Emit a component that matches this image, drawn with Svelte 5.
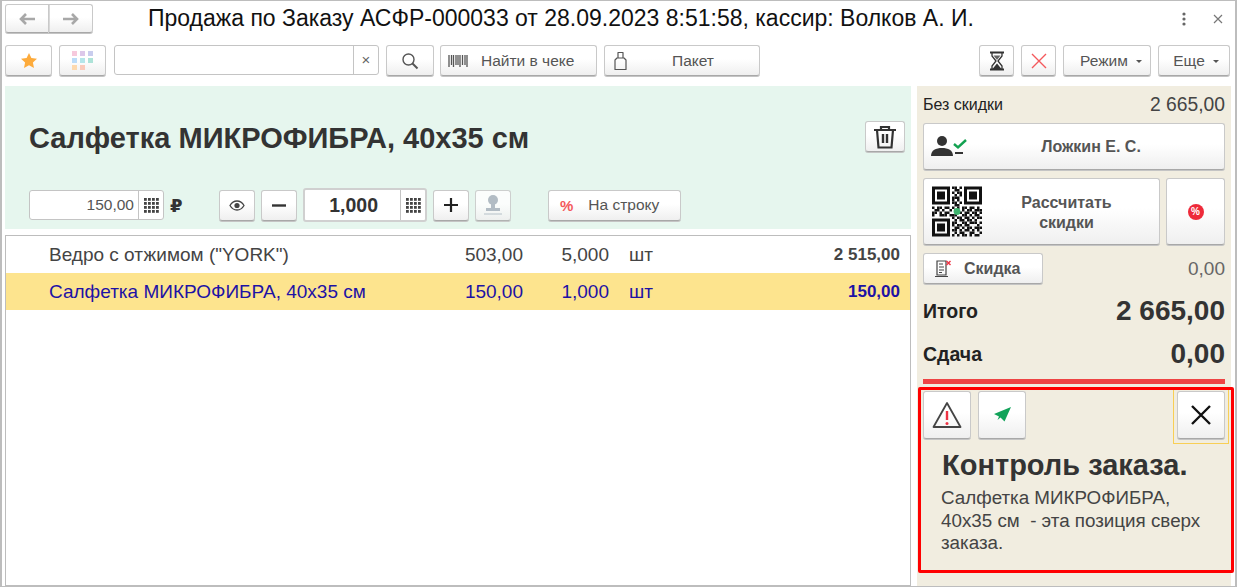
<script>
	const rows = [
		{ name: 'Ведро с отжимом ("YORK")', price: '503,00', qty: '5,000', unit: 'шт', sum: '2 515,00', selected: false },
		{ name: 'Салфетка МИКРОФИБРА, 40х35 см', price: '150,00', qty: '1,000', unit: 'шт', sum: '150,00', selected: true }
	];

	const appColors = ['#f6c9dc', '#dcc8ea', '#c9cdee', '#bcdcf8', '#b5e6ea', '#aee3d8', '#fdd9ae', '#fbcabb'];

	// QR modules without the three finder squares
	const qrBits = [
		'00000000110100000000',
		'00000000011000000000',
		'00000000101100000000',
		'00000000010100000000',
		'00000000111000000000',
		'00000000101000000000',
		'00000000110100000000',
		'00000000011000000000',
		'10110110101011011010',
		'01101001010010110111',
		'11010110001101101101',
		'10011101110011010110',
		'00000000101101101011',
		'00000000010110110100',
		'00000000110011011101',
		'00000000101101100010',
		'00000000011010110111',
		'00000000110101101010',
		'00000000010110011001',
		'00000000101011010110'
	];
	const qrCells = qrBits.flatMap((line, y) =>
		[...line].flatMap((bit, x) => (bit === '1' ? [{ x, y }] : []))
	);
	const keypadDots = [1, 5, 9, 13].flatMap((y) => [1, 5, 9, 13].map((x) => ({ x, y })));
</script>

{#snippet keypad()}
	<svg width="16" height="16" viewBox="0 0 16 16">
		{#each keypadDots as d}
			<rect x={d.x} y={d.y} width="2.8" height="2.8" fill="#444" />
		{/each}
	</svg>
{/snippet}

<div class="window">
	<header class="head">
		<div class="nav">
			<button class="btn nav-part" aria-label="Назад">
				<svg width="18" height="14" viewBox="0 0 18 14"><path d="M8 2 3 7l5 5M3 7h14" fill="none" stroke="#a8a8a8" stroke-width="2.6" /></svg>
			</button>
			<button class="btn nav-part" aria-label="Вперед">
				<svg width="18" height="14" viewBox="0 0 18 14"><path d="M10 2l5 5-5 5M15 7H1" fill="none" stroke="#a8a8a8" stroke-width="2.6" /></svg>
			</button>
		</div>
		<h1 class="doc-title">Продажа по Заказу АСФР-000033 от 28.09.2023 8:51:58, кассир: Волков А. И.</h1>
		<svg class="dots" width="4" height="14" viewBox="0 0 4 14"><circle cx="2" cy="2" r="1.6" fill="#666" /><circle cx="2" cy="7" r="1.6" fill="#666" /><circle cx="2" cy="12" r="1.6" fill="#666" /></svg>
		<svg class="win-close" width="10" height="10" viewBox="0 0 10 10"><path d="M1 1l8 8M9 1 1 9" stroke="#777" stroke-width="1.2" /></svg>
	</header>

	<div class="toolbar">
		<button class="btn tool-star" aria-label="Избранное">
			<svg width="16" height="15" viewBox="0 0 16 15"><path d="M8 0l2.400 5 5.600.7-4.100 3.800 1.100 5.500L8 12.300 3 15l1.100-5.500L0 5.700 5.600 5z" fill="#fdab3c" /></svg>
		</button>
		<button class="btn tool-star" aria-label="Приложения">
			<span class="apps">
				{#each appColors as c}
					<i style="background: {c}"></i>
				{/each}
			</span>
		</button>
		<div class="search">
			<span class="search-field"></span>
			<span class="search-clear">×</span>
		</div>
		<button class="btn tool-search" aria-label="Поиск">
			<svg width="18" height="18" viewBox="0 0 18 18"><circle cx="7.500" cy="7.500" r="5.500" fill="none" stroke="#555" stroke-width="1.400" /><path d="M11.500 11.500l5 5" stroke="#555" stroke-width="2" /></svg>
		</button>
		<button class="btn tool-find">
			<svg width="20" height="14" viewBox="0 0 20 14"><path d="M1 1v12M3.500 1v10M5.500 1v12M8 1v10M10 1v10M12 1v12M14.500 1v10M17 1v10M19 1v12" stroke="#555" stroke-width="1.300" /></svg>
			<span>Найти в чеке</span>
		</button>
		<button class="btn tool-bag">
			<svg width="13" height="20" viewBox="0 0 13 20"><path d="M3 7 1 9v9.500h11V9L10 7zM4 7V1.500h5V7" fill="none" stroke="#555" stroke-width="1.200" stroke-linejoin="round" /></svg>
			<span>Пакет</span>
		</button>
		<div class="toolbar-gap"></div>
		<button class="btn tool-small" aria-label="Отложить">
			<svg width="16" height="20" viewBox="0 0 16 20"><path d="M1 1.500h14M1 18.500h14" stroke="#333" stroke-width="2" /><path d="M3 2v3l4 5-4 5v3M13 2v3l-4 5 4 5v3" fill="none" stroke="#333" stroke-width="1.300" /><path d="M3.500 18 8 12.500l4.500 5.500z" fill="#333" /><path d="M4.500 4.500h7L8 9z" fill="#666" /></svg>
		</button>
		<button class="btn tool-small" aria-label="Отмена">
			<svg width="18" height="18" viewBox="0 0 18 18"><path d="M2 2l14 14M16 2 2 16" stroke="#f4595c" stroke-width="1.400" /></svg>
		</button>
		<button class="btn tool-mode">Режим<i class="caret"></i></button>
		<button class="btn tool-more">Еще<i class="caret"></i></button>
	</div>

	<div class="main">
		<section class="left">
			<div class="product">
				<div class="product-top">
					<h2 class="product-name">Салфетка МИКРОФИБРА, 40х35 см</h2>
					<button class="btn trash" aria-label="Удалить">
						<svg width="24" height="24" viewBox="0 0 24 24"><path d="M1 5h22M8 5V2h8v3M4 5l1.500 17.500h13L20 5" fill="none" stroke="#333" stroke-width="2.200" /><path d="M10 9v9M14 9v9" stroke="#333" stroke-width="2.400" /></svg>
					</button>
				</div>
				<div class="controls">
					<div class="field price">
						<span class="field-value">150,00</span>
						<span class="field-pad">{@render keypad()}</span>
					</div>
					<span class="ruble">₽</span>
					<button class="btn square eye" aria-label="Просмотр">
						<svg width="16" height="11" viewBox="0 0 16 11"><path d="M1 5.500C3 2 5.500 1 8 1s5 1 7 4.500C13 9 10.500 10 8 10S3 9 1 5.500z" fill="none" stroke="#444" stroke-width="1.300" /><circle cx="8" cy="5.500" r="2.600" fill="#444" /></svg>
					</button>
					<button class="btn square" aria-label="Меньше">
						<svg width="14" height="3" viewBox="0 0 14 3"><path d="M0 1.500h14" stroke="#333" stroke-width="2.400" /></svg>
					</button>
					<div class="field qty">
						<span class="field-value">1,000</span>
						<span class="field-pad">{@render keypad()}</span>
					</div>
					<button class="btn square" aria-label="Больше">
						<svg width="14" height="14" viewBox="0 0 14 14"><path d="M0 7h14M7 0v14" stroke="#222" stroke-width="2.200" /></svg>
					</button>
					<button class="btn square stamp" aria-label="Штамп">
						<svg width="20" height="22" viewBox="0 0 20 22"><circle cx="10" cy="6" r="5" fill="#a9b3bd" /><path d="M8 10h4v4h5v3H3v-3h5z" fill="#a9b3bd" /><path d="M1 20h18" stroke="#c5ccd3" stroke-width="1.500" /></svg>
					</button>
					<button class="btn per-line">
						<span class="pct">%</span>
						<span>На строку</span>
					</button>
				</div>
			</div>

			<div class="table">
				{#each rows as row}
					<div class="row" class:selected={row.selected}>
						<span class="c-name">{row.name}</span>
						<span class="c-price">{row.price}</span>
						<span class="c-qty">{row.qty}</span>
						<span class="c-unit">{row.unit}</span>
						<b class="c-sum">{row.sum}</b>
					</div>
				{/each}
			</div>
		</section>

		<aside class="side">
			<div class="line no-disc">
				<span>Без скидки</span>
				<span class="no-disc-val">2 665,00</span>
			</div>
			<button class="btn client">
				<svg class="client-ico" width="36" height="24" viewBox="0 0 36 24"><circle cx="11" cy="6" r="5" fill="#333" /><path d="M0 21c0-6 5-8 11-8s11 2 11 8z" fill="#333" /><path d="M23 9l4 3.500L35 5" fill="none" stroke="#12a150" stroke-width="2.400" /><path d="M24 18h8" stroke="#333" stroke-width="2" /></svg>
				<span>Ложкин Е. С.</span>
			</button>
			<div class="calc-row">
				<button class="btn calc">
					<svg class="qr" width="50" height="51" viewBox="0 0 50 50">
						{#each [[0, 0], [32, 0], [0, 32]] as p}
							<rect x={p[0] + 1.500} y={p[1] + 1.500} width="15" height="15" fill="none" stroke="#111" stroke-width="3" />
							<rect x={p[0] + 5} y={p[1] + 5} width="8" height="8" fill="#111" />
						{/each}
						{#each qrCells as c}
							<rect x={c.x * 2.500} y={c.y * 2.500} width="2.500" height="2.500" fill="#111" />
						{/each}
						<circle cx="25" cy="25" r="3.400" fill="#3fb56f" />
					</svg>
					<span class="calc-text">Рассчитать<br />скидки</span>
				</button>
				<button class="btn pct-btn" aria-label="Скидки">
					<span class="pct-badge">%</span>
				</button>
			</div>
			<div class="line disc-row">
				<button class="btn disc">
					<svg width="18" height="18" viewBox="0 0 18 18"><path d="M3 1h9v14H3zM1 16.500h13" fill="none" stroke="#444" stroke-width="1.200" /><path d="M5 4h4M5 7h5M5 10h5M5 12.500h3" stroke="#444" stroke-width="1" /><path d="M12.500 1l4 4M16.500 1l-4 4" stroke="#ee3344" stroke-width="1.400" /></svg>
					<span>Скидка</span>
				</button>
				<span class="disc-val">0,00</span>
			</div>
			<div class="line total first">
				<b>Итого</b>
				<b class="total-val">2 665,00</b>
			</div>
			<div class="line total">
				<b>Сдача</b>
				<b class="total-val">0,00</b>
			</div>
			<div class="red-bar"></div>

			<div class="notice">
				<div class="notice-btns">
					<button class="btn notice-btn" aria-label="Предупреждение">
						<svg width="30" height="28" viewBox="0 0 30 28"><path d="M15 2 1.500 26h27z" fill="none" stroke="#444" stroke-width="1.800" stroke-linejoin="round" /><path d="M15 10v9" stroke="#ee3344" stroke-width="2.400" /><circle cx="15" cy="22.500" r="1.500" fill="#ee3344" /></svg>
					</button>
					<button class="btn notice-btn" aria-label="Отправить">
						<svg width="17" height="17" viewBox="0 0 17 17"><path d="M17 0 0 7l5 2.500L3.500 13l3-2.500 4 4z" fill="#12a35a" /></svg>
					</button>
					<span class="focus-ring">
						<button class="btn notice-btn" aria-label="Закрыть">
							<svg width="20" height="20" viewBox="0 0 20 20"><path d="M1 1l18 18M19 1 1 19" stroke="#111" stroke-width="2.400" /></svg>
						</button>
					</span>
				</div>
				<h3 class="notice-title">Контроль заказа.</h3>
				<p class="notice-text">Салфетка МИКРОФИБРА, 40х35 см&nbsp; - эта позиция сверх заказа.</p>
			</div>
		</aside>
	</div>
</div>

<style>
	:global(body) {
		margin: 0;
		background: #fff;
	}

	.window {
		box-sizing: border-box;
		width: 1237px;
		height: 587px;
		display: flex;
		flex-direction: column;
		border: 1px solid #bdbdbd;
		border-width: 1px 2px;
		overflow: hidden;
		font-family: 'Liberation Sans', Arial, sans-serif;
		color: #333;
	}

	.btn {
		box-sizing: border-box;
		display: flex;
		align-items: center;
		justify-content: center;
		margin: 0;
		padding: 0;
		border: 1px solid #c9c9c9;
		border-bottom-color: #a8a8a8;
		border-radius: 3px;
		background: linear-gradient(#ffffff 45%, #efefef);
		box-shadow: 0 1px 0 #c4c4c4;
		font: inherit;
		font-size: 15.500px;
		color: #555;
	}

	/* шапка */
	.head {
		display: flex;
		align-items: center;
		height: 29px;
		margin: 3px 3px 0;
	}

	.nav {
		display: flex;
		width: 88px;
	}

	.nav-part {
		width: 44px;
		height: 29px;
		border-radius: 3px 0 0 3px;
	}

	.nav-part + .nav-part {
		border-left: 0;
		border-radius: 0 3px 3px 0;
		box-shadow: 0 1px 0 #c4c4c4, inset 1px 0 0 #d8d8d8;
	}

	.doc-title {
		margin: 0 0 0 55px;
		flex: 1;
		font-size: 23px;
		font-weight: 400;
		color: #111;
		white-space: nowrap;
	}

	.dots {
		margin-right: 27px;
	}

	.win-close {
		margin-right: 9px;
	}

	/* панель инструментов */
	.toolbar {
		display: flex;
		gap: 7px;
		height: 31px;
		margin: 12px 5px 0 3px;
	}

	.tool-star {
		width: 47px;
	}

	.apps {
		display: grid;
		grid-template-columns: repeat(3, 5px);
		gap: 2px 3px;
	}

	.apps i {
		width: 5px;
		height: 5px;
	}

	.search {
		display: flex;
		width: 265px;
		height: 30px;
		margin-left: 1px;
		box-sizing: border-box;
		border: 1px solid #c4c4c4;
		border-radius: 3px;
	}

	.search-field {
		flex: 1;
		border-right: 1px solid #c4c4c4;
	}

	.search-clear {
		width: 24px;
		text-align: center;
		line-height: 28px;
		font-size: 15px;
		color: #666;
	}

	.tool-search {
		width: 48px;
		margin-right: -1px;
	}

	.tool-find {
		width: 157px;
		justify-content: flex-start;
		padding-left: 7px;
		gap: 13px;
	}

	.tool-bag {
		width: 156px;
		justify-content: flex-start;
		padding-left: 9px;
		gap: 45px;
	}

	.toolbar-gap {
		flex: 1;
	}

	.tool-small {
		width: 35px;
	}

	.tool-mode {
		width: 88px;
		padding-left: 8px;
	}

	.tool-more {
		width: 72px;
		padding-left: 4px;
	}

	.caret {
		margin: 2px 0 0 8px;
		border: 3px solid transparent;
		border-top: 3px solid #555;
		border-bottom: 0;
	}

	/* левая часть */
	.main {
		flex: 1;
		display: flex;
		min-height: 0;
		margin: 10px 4px 0 3px;
		gap: 6px;
	}

	.left {
		width: 906px;
		display: flex;
		flex-direction: column;
		gap: 6px;
	}

	.product {
		height: 143px;
		box-sizing: border-box;
		padding: 35px 6px 0 24px;
		background: #e6f6ee;
	}

	.product-top {
		display: flex;
		align-items: center;
		justify-content: space-between;
		height: 31px;
	}

	.product-name {
		margin: 3px 0 0;
		font-size: 29px;
		font-weight: 700;
		color: #333;
	}

	.trash {
		width: 40px;
		height: 31px;
	}

	.controls {
		display: flex;
		align-items: center;
		gap: 6px;
		height: 34px;
		margin-top: 36px;
	}

	.field {
		box-sizing: border-box;
		display: flex;
		background: #fff;
		border: 1px solid #c4c4c4;
		border-radius: 3px;
	}

	.field-value {
		flex: 1;
		text-align: right;
	}

	.field-pad {
		display: flex;
		align-items: center;
		justify-content: center;
		width: 24px;
		border-left: 1px solid #c4c4c4;
	}

	.price {
		width: 135px;
		height: 30px;
		font-size: 15.500px;
		line-height: 28px;
		color: #555;
	}

	.price .field-value {
		padding-right: 4px;
	}

	.ruble {
		width: 24px;
		font-family: 'DejaVu Sans', sans-serif;
		font-size: 18px;
		font-weight: 700;
		color: #333;
	}

	.square {
		width: 36px;
		height: 31px;
	}

	.eye {
		margin-left: 19px;
	}

	.qty {
		width: 124px;
		height: 34px;
		border-width: 2px;
		border-color: #d0d0d0;
		font-size: 19.500px;
		font-weight: 700;
		line-height: 30px;
	}

	.qty .field-value {
		padding-right: 22px;
	}

	.stamp {
		opacity: 0.85;
	}

	.per-line {
		width: 133px;
		height: 31px;
		margin-left: 31px;
		justify-content: flex-start;
		padding-left: 11px;
		gap: 15px;
	}

	.pct {
		font-size: 15px;
		font-weight: 700;
		color: #f4595c;
	}

	/* таблица */
	.table {
		flex: 1;
		border: 1px solid #bdbdbd;
		background: #fff;
		font-size: 19px;
		color: #444;
	}

	.row {
		display: grid;
		grid-template-columns: 414px 60px 86px 30px 1fr;
		align-items: center;
		height: 37px;
		padding: 0 10px 0 43px;
	}

	.row.selected {
		background: #fde48e;
		color: #1d12a5;
	}

	.c-price,
	.c-qty,
	.c-sum {
		text-align: right;
	}

	.c-unit {
		padding-left: 20px;
		white-space: nowrap;
	}

	.c-sum {
		font-size: 17px;
	}

	/* правая часть */
	.side {
		flex: 0 0 314px;
		min-width: 0;
		box-sizing: border-box;
		padding: 0 6px;
		background: #f1ede0;
	}

	.line {
		display: flex;
		align-items: center;
		justify-content: space-between;
	}

	.no-disc {
		height: 37px;
		font-size: 16px;
		color: #222;
	}

	.no-disc-val {
		font-size: 19.300px;
		color: #444;
	}

	.client {
		position: relative;
		width: 100%;
		height: 47px;
		padding-left: 34px;
		font-size: 16px;
		font-weight: 700;
	}

	.client-ico {
		position: absolute;
		left: 7px;
		top: 11px;
	}

	.calc-row {
		display: flex;
		gap: 6px;
		margin-top: 8px;
	}

	.calc {
		width: 237px;
		height: 67px;
		justify-content: flex-start;
		padding-left: 8px;
		font-size: 16px;
		font-weight: 700;
		line-height: 20px;
	}

	.calc-text {
		flex: 1;
		padding: 2px 8px 0 0;
		text-align: center;
	}

	.pct-btn {
		flex: 1;
	}

	.pct-badge {
		width: 16px;
		height: 16px;
		border-radius: 50%;
		background: #ee2a3a;
		color: #fff;
		font-size: 10px;
		font-weight: 700;
		line-height: 16px;
		text-align: center;
	}

	.disc-row {
		height: 31px;
		margin-top: 8px;
	}

	.disc {
		width: 120px;
		height: 31px;
		justify-content: flex-start;
		padding-left: 10px;
		gap: 12px;
		font-size: 16px;
		font-weight: 700;
	}

	.disc-val {
		font-size: 19px;
		color: #666;
	}

	.total {
		height: 34px;
		margin-top: 9px;
		font-size: 19.500px;
		color: #222;
	}

	.total.first {
		margin-top: 10px;
	}

	.total-val {
		font-size: 28px;
		color: #333;
	}

	.red-bar {
		height: 5px;
		margin-top: 8px;
		background: #ee4444;
	}

	/* контроль заказа */
	.notice {
		box-sizing: border-box;
		height: 186px;
		margin: 3px -9px 0 -5px;
		padding: 1px 6px 0 2px;
		border: 3px solid #f00;
		border-radius: 2px;
	}

	.notice-btns {
		display: flex;
		gap: 7px;
	}

	.notice-btn {
		width: 48px;
		height: 48px;
	}

	.focus-ring {
		margin: -1px -4px 0 auto;
		padding: 1px 3px 4px;
		border: 1px solid #f8cf55;
		border-top: 0;
	}

	.notice-title {
		margin: 2px 0 0 19px;
		font-size: 29px;
		font-weight: 700;
		line-height: 38px;
		color: #333;
	}

	.notice-text {
		max-width: 275px;
		margin: 3px 0 0 18px;
		font-size: 18.800px;
		line-height: 22.500px;
		color: #444;
	}
</style>
